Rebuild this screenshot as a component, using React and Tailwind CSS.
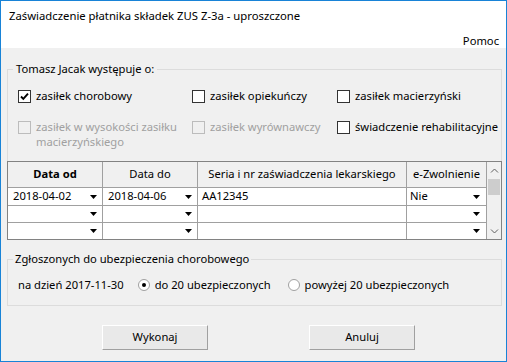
import React from "react";

const rows = [
  { od: "2018-04-02", do: "2018-04-06", nr: "AA12345", e: "Nie" },
  { od: "", do: "", nr: "", e: "" },
  { od: "", do: "", nr: "", e: "" },
];

function Check({ checked, disabled }) {
  return (
    <span
      className={`mt-[2px] w-[13px] h-[13px] shrink-0 border flex items-center justify-center ${
        disabled ? "border-[#bcbcbc] bg-[#f0f0f0]" : "border-[#333333] bg-white"
      }`}
    >
      {checked && (
        <svg width="11" height="11" viewBox="0 0 11 11">
          <path d="M2 5.5 L4.3 7.8 L9 2.6" fill="none" stroke="#000" strokeWidth="1.9" />
        </svg>
      )}
    </span>
  );
}

function Option({ label, checked, disabled }) {
  return (
    <div className="flex items-start gap-[5px] whitespace-nowrap">
      <Check checked={checked} disabled={disabled} />
      <span className={disabled ? "text-[#a0a0a0]" : ""}>{label}</span>
    </div>
  );
}

function Radio({ checked }) {
  return (
    <span className="w-[12px] h-[12px] shrink-0 rounded-full border border-[#a0a0a0] bg-white flex items-center justify-center">
      {checked && <span className="w-[4px] h-[4px] rounded-full bg-black" />}
    </span>
  );
}

function Arrow() {
  return (
    <svg width="7" height="4" viewBox="0 0 7 4" className="shrink-0">
      <path d="M0 0H7L3.5 4Z" fill="#000" />
    </svg>
  );
}

function Chevron({ down }) {
  return (
    <svg width="9" height="6" viewBox="0 0 9 6">
      <path d={down ? "M1 1.5 L4.5 5 L8 1.5" : "M1 4.5 L4.5 1 L8 4.5"} fill="none" stroke="#606060" strokeWidth="1" />
    </svg>
  );
}

export default function App() {
  return (
    <div className="w-[507px] h-[362px] border border-[#1883d7] bg-[#f0f0f0] flex flex-col text-[11.2px] text-black font-['Segoe_UI','Noto_Sans',sans-serif]">
      <div className="h-[47px] bg-white flex flex-col">
        <div className="pl-[8px] pt-[7px] leading-[16px] whitespace-nowrap text-[11.3px]">Zaświadczenie płatnika składek ZUS Z-3a - uproszczone</div>
        <div className="mt-[9px] pr-[7px] text-right leading-[15px]">Pomoc</div>
      </div>

      <div className="flex-1 flex flex-col pl-[6px] pr-[4px] pt-[13px]">
        <fieldset className="border border-[#dcdcdc]">
          <legend className="ml-[5px] px-[3px] leading-[16px]">Tomasz Jacak występuje o:</legend>
          <div className="mt-[11px] pl-[10px] grid grid-cols-[174px_145px_1fr] gap-y-[15px] leading-[16px]">
            <Option label="zasiłek chorobowy" checked />
            <Option label="zasiłek opiekuńczy" />
            <Option label="zasiłek macierzyński" />
            <div className="flex items-start gap-[5px] leading-[15px] whitespace-nowrap">
              <Check disabled />
              <span className="text-[#a0a0a0]">
                zasiłek w wysokości zasiłku
                <br />
                macierzyńskiego
              </span>
            </div>
            <Option label="zasiłek wyrównawczy" disabled />
            <Option label="świadczenie rehabilitacyjne" />
          </div>

          <div className="mt-[12px] -mx-px -mb-px border border-[#828282] flex">
            <div className="flex-1 flex flex-col">
              <div className="h-[26px] grid grid-cols-[95px_95px_209px_80px] border-b border-[#a0a0a0]">
                <div className="border-r border-[#a0a0a0] flex items-center justify-center font-bold">Data od</div>
                <div className="border-r border-[#a0a0a0] flex items-center justify-center">Data do</div>
                <div className="border-r border-[#a0a0a0] flex items-center justify-center whitespace-nowrap overflow-hidden">
                  Seria i nr zaświadczenia lekarskiego
                </div>
                <div className="border-r border-[#a0a0a0] flex items-center justify-center whitespace-nowrap overflow-hidden">
                  e-Zwolnienie
                </div>
              </div>
              {rows.map((r, i) => (
                <div
                  key={i}
                  className={`grid grid-cols-[95px_95px_209px_80px] bg-white ${
                    i === 0 ? "h-[18px] border-b border-[#a0a0a0]" : i === 1 ? "h-[17px] border-b border-[#a0a0a0]" : "h-[16px]"
                  }`}
                >
                  <div className="border-r border-[#a0a0a0] flex items-center justify-between pl-[5px] pr-[5px]">
                    <span>{r.od}</span>
                    <Arrow />
                  </div>
                  <div className="border-r border-[#a0a0a0] flex items-center justify-between pl-[5px] pr-[5px]">
                    <span>{r.do}</span>
                    <Arrow />
                  </div>
                  <div className="border-r border-[#a0a0a0] flex items-center pl-[4px]">{r.nr}</div>
                  <div className="border-r border-[#a0a0a0] flex items-center justify-between pl-[3px] pr-[6px]">
                    <span>{r.e}</span>
                    <Arrow />
                  </div>
                </div>
              ))}
            </div>
            <div className="w-[14px] bg-[#f0f0f0] flex flex-col items-center">
              <div className="h-[17px] flex items-center justify-center">
                <Chevron />
              </div>
              <div className="w-[12px] h-[16px] bg-[#cdcdcd]" />
              <div className="flex-1" />
              <div className="h-[17px] flex items-center justify-center">
                <Chevron down />
              </div>
            </div>
          </div>
        </fieldset>

        <fieldset className="mt-[11px] border border-[#dcdcdc] pb-[12px]">
          <legend className="ml-[5px] px-[2px] leading-[16px]">Zgłoszonych do ubezpieczenia chorobowego</legend>
          <div className="mt-[10px] pl-[10px] flex items-center leading-[16px] whitespace-nowrap">
            <span>na dzień 2017-11-30</span>
            <div className="ml-[14px] flex items-center gap-[5px]">
              <Radio checked />
              <span>do 20 ubezpieczonych</span>
            </div>
            <div className="ml-[17px] flex items-center gap-[5px]">
              <Radio />
              <span>powyżej 20 ubezpieczonych</span>
            </div>
          </div>
        </fieldset>

        <div className="mt-[19px] pl-[95px] flex gap-[101px]">
          <button className="w-[106px] h-[25px] bg-[#e9e9e9] border border-t-white border-l-white border-r-[#a0a0a0] border-b-[#a0a0a0]">
            Wykonaj
          </button>
          <button className="w-[106px] h-[25px] bg-[#e9e9e9] border border-t-white border-l-white border-r-[#a0a0a0] border-b-[#a0a0a0]">
            Anuluj
          </button>
        </div>
      </div>
    </div>
  );
}
